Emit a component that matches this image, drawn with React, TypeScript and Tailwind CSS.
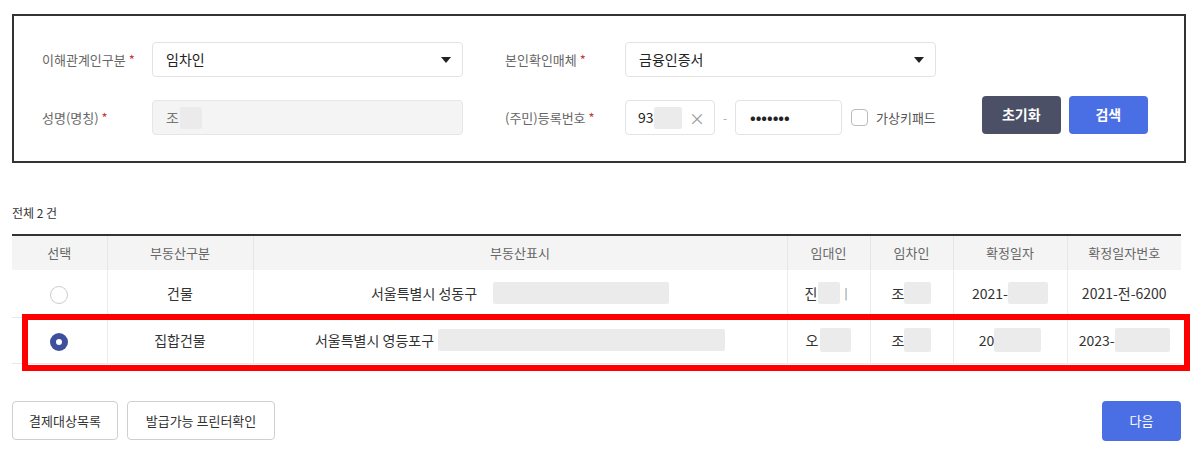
import React from "react";

const F = { fontFamily: '"Noto Sans CJK KR", "Noto Sans", sans-serif' };

function Blk({ w, h = 20, className = "" }: { w: number; h?: number; className?: string }) {
  return <span className={"inline-block bg-[#ebebeb] rounded-[2px] blur-[0.6px] " + className} style={{ width: w, height: h }} />;
}

function Caret() {
  return (
    <svg width="10" height="6" viewBox="0 0 10 6" className="shrink-0">
      <path d="M0 0 L10 0 L5 6 Z" fill="#222" />
    </svg>
  );
}

function Label({ children, w }: { children: React.ReactNode; w: string }) {
  return (
    <div className={`${w} shrink-0 text-[13px] text-[#666]`}>
      {children} <span className="text-[#c83a3a]">*</span>
    </div>
  );
}

export default function App() {
  return (
    <div className="w-[1200px] h-[466px] bg-white overflow-hidden" style={F}>
      <div className="pt-[14px] pl-[12px]">
        <div className="w-[1174px] h-[149px] border-2 border-[#333] pl-[28px] pt-[26px]">
          <div className="flex items-center h-[35px]">
            <Label w="w-[110px]">이해관계인구분</Label>
            <div className="w-[311px] h-[35px] border border-[#e3e3e3] rounded-[4px] flex items-center justify-between pl-[13px] pr-[11px] text-[14px] text-[#222]">
              <span>임차인</span>
              <Caret />
            </div>
            <div className="w-[42px]" />
            <Label w="w-[120px]">본인확인매체</Label>
            <div className="w-[311px] h-[35px] border border-[#e3e3e3] rounded-[4px] flex items-center justify-between pl-[13px] pr-[11px] text-[14px] text-[#222]">
              <span>금융인증서</span>
              <Caret />
            </div>
          </div>
          <div className="flex items-center h-[35px] mt-[23px]">
            <Label w="w-[110px]">성명(명칭)</Label>
            <div className="w-[311px] h-[35px] border border-[#e6e6e6] bg-[#f4f4f4] rounded-[4px] flex items-center pl-[13px] text-[14px] text-[#777]">
              <span>조</span>
              <Blk w={22} h={22} className="ml-[1px] bg-[#e4e4e4]" />
            </div>
            <div className="w-[42px]" />
            <Label w="w-[120px]">(주민)등록번호</Label>
            <div className="w-[90px] h-[35px] border border-[#e3e3e3] rounded-[4px] flex items-center pl-[12px] pr-[9px] text-[14px] text-[#222]">
              <span>93</span>
              <Blk w={28} h={22} />
              <span className="ml-auto text-[16px] text-[#999] leading-none">×</span>
            </div>
            <div className="w-[20px] text-center text-[12px] text-[#aaa]">-</div>
            <div className="w-[107px] h-[35px] border border-[#e3e3e3] rounded-[4px] flex items-center pl-[14px] text-[15px] text-[#222] font-bold">
              •••••••
            </div>
            <div className="ml-[9px] w-[17px] h-[17px] border border-[#bbb] rounded-[4px]" />
            <span className="ml-[8px] text-[13px] text-[#555]">가상키패드</span>
            <div className="ml-[46px] flex gap-[8px] -mt-[6px]">
              <button className="w-[79px] h-[38px] rounded-[4px] bg-[#4b5066] text-white text-[14px] font-semibold" style={F}>초기화</button>
              <button className="w-[79px] h-[38px] rounded-[4px] bg-[#4a6ee3] text-white text-[14px] font-semibold" style={F}>검색</button>
            </div>
          </div>
        </div>

        <div className="mt-[41px] text-[12px] text-[#333]">전체 2 건</div>

        <div className="relative mt-[12px] w-[1169px]">
          <table className="w-[1169px] table-fixed border-collapse border-t-2 border-[#333]">
            <colgroup>
              <col className="w-[95px]" />
              <col className="w-[146px]" />
              <col className="w-[534px]" />
              <col className="w-[83px]" />
              <col className="w-[83px]" />
              <col className="w-[114px]" />
              <col className="w-[114px]" />
            </colgroup>
            <thead>
              <tr className="h-[35px] bg-[#f4f4f4] text-[13px] text-[#666]">
                {["선택", "부동산구분", "부동산표시", "임대인", "임차인", "확정일자", "확정일자번호"].map((h, i) => (
                  <th key={h} className={"font-normal " + (i > 0 ? "border-l border-[#e6e6e6]" : "")}>{h}</th>
                ))}
              </tr>
            </thead>
            <tbody className="text-[14px] text-[#333]">
              <tr className="h-[47px] border-b border-[#e8e8e8]">
                <td className="text-center">
                  <span className="inline-block w-[18px] h-[18px] rounded-full border border-[#ccc] align-middle" />
                </td>
                <td className="text-center border-l border-[#ececec]">건물</td>
                <td className="border-l border-[#ececec]">
                  <div className="flex items-center justify-center">
                    <span>서울특별시 성동구</span>
                    <Blk w={176} h={22} className="ml-[16px]" />
                  </div>
                </td>
                <td className="border-l border-[#ececec]">
                  <div className="flex items-center justify-center"><span>진</span><Blk w={22} h={22} /><span className="text-[#aaa]">ㅣ</span></div>
                </td>
                <td className="border-l border-[#ececec]">
                  <div className="flex items-center justify-center"><span>조</span><Blk w={27} h={22} /></div>
                </td>
                <td className="border-l border-[#ececec]">
                  <div className="flex items-center justify-center"><span>2021-</span><Blk w={40} h={22} /></div>
                </td>
                <td className="border-l border-[#ececec] text-center">2021-전-6200</td>
              </tr>
              <tr className="h-[46px] border-b border-[#e8e8e8]">
                <td className="text-center">
                  <span className="inline-flex items-center justify-center w-[18px] h-[18px] rounded-full bg-[#3e4f9e] align-middle">
                    <span className="w-[6px] h-[6px] rounded-full bg-white" />
                  </span>
                </td>
                <td className="text-center border-l border-[#ececec]">집합건물</td>
                <td className="border-l border-[#ececec]">
                  <div className="flex items-center justify-center">
                    <span>서울특별시 영등포구</span>
                    <Blk w={287} h={22} className="ml-[4px]" />
                  </div>
                </td>
                <td className="border-l border-[#ececec]">
                  <div className="flex items-center justify-center"><span>오</span><Blk w={31} h={24} className="ml-[2px]" /></div>
                </td>
                <td className="border-l border-[#ececec]">
                  <div className="flex items-center justify-center"><span>조</span><Blk w={27} h={24} /></div>
                </td>
                <td className="border-l border-[#ececec]">
                  <div className="flex items-center justify-center"><span>20</span><Blk w={47} h={24} /></div>
                </td>
                <td className="border-l border-[#ececec]">
                  <div className="flex items-center justify-center"><span>2023-</span><Blk w={55} h={24} /></div>
                </td>
              </tr>
            </tbody>
          </table>
          <div className="absolute left-[10px] top-[80px] w-[1168px] h-[57px] border-[6px] border-[#ff0000] pointer-events-none" />
        </div>

        <div className="mt-[37px] w-[1169px] flex items-center">
          <button className="w-[106px] h-[39px] border border-[#cfcfcf] rounded-[4px] text-[13px] text-[#333] bg-white" style={F}>결제대상목록</button>
          <button className="ml-[9px] w-[148px] h-[39px] border border-[#cfcfcf] rounded-[4px] text-[13px] text-[#333] bg-white" style={F}>발급가능 프린터확인</button>
          <button className="ml-auto w-[79px] h-[40px] rounded-[4px] bg-[#4a6ee3] text-white text-[13px]" style={F}>다음</button>
        </div>
      </div>
    </div>
  );
}
